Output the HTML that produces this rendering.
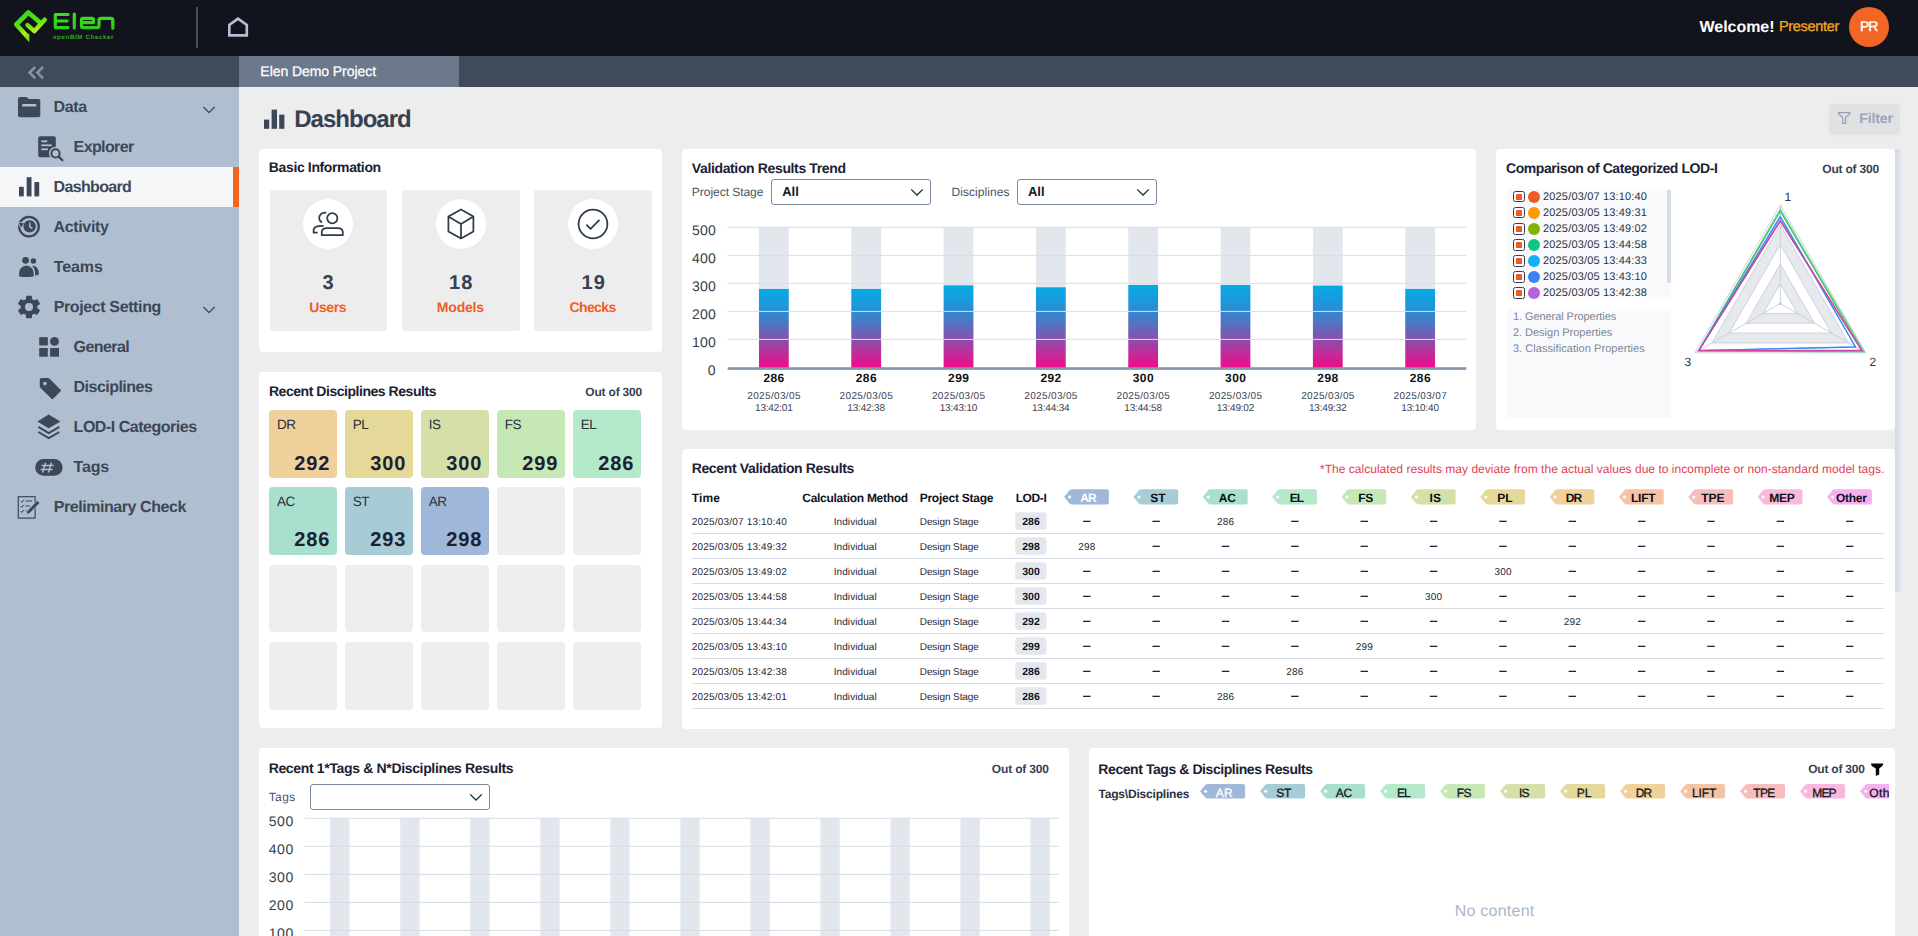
<!DOCTYPE html>
<html><head><meta charset="utf-8"><title>Elen Dashboard</title>
<style>
*{box-sizing:border-box;margin:0;padding:0}
html,body{width:1918px;height:936px;overflow:hidden;background:#ededed;font-family:"Liberation Sans",sans-serif;color:#1b2233;text-rendering:geometricPrecision}
body{position:relative}
.a{position:absolute}
.t{position:absolute;white-space:pre;line-height:1;font-weight:bold}
svg{position:absolute;overflow:visible}
.card{position:absolute;background:#fff;border-radius:4px}

</style></head>
<body>
<div class="a" style="left:0;top:0;width:1918px;height:56px;background:#12141d"></div>
<div class="a" style="left:0;top:56px;width:1918px;height:31px;background:#404b5a"></div>
<div class="a" style="left:239px;top:56px;width:220px;height:31px;background:#6c788c"></div>
<svg style="left:0;top:0" width="130" height="56" viewBox="0 0 130 56">
<defs><linearGradient id="lg1" gradientUnits="userSpaceOnUse" x1="20" y1="10" x2="30" y2="40"><stop offset="0" stop-color="#33d41a"/><stop offset="0.5" stop-color="#4fe016"/><stop offset="0.85" stop-color="#c2ee1e"/><stop offset="1" stop-color="#8fe61c"/></linearGradient>
<linearGradient id="lg2" gradientUnits="userSpaceOnUse" x1="0" y1="12" x2="0" y2="30"><stop offset="0" stop-color="#3fe01d"/><stop offset="1" stop-color="#2fc91a"/></linearGradient></defs>
<g transform="translate(-0.9,-0.7)"><path d="M28.2 37.2 L17.2 25.2 L29.2 13.2 L41.2 23.4" fill="none" stroke="url(#lg1)" stroke-width="4.7" stroke-linejoin="round" stroke-linecap="butt"/>
<path d="M45.6 20.4 L35.3 31.8 L28.4 25.8" fill="none" stroke="url(#lg1)" stroke-width="4.5" stroke-linejoin="round" stroke-linecap="round"/>
<path d="M26.4 35.2 L30.2 34.4 L30.2 43 L26 38.4 Z" fill="#7fe41c"/>
</g>
<g fill="none" stroke="url(#lg2)" stroke-width="3.2" stroke-linejoin="round" stroke-linecap="round">
<path d="M68 14.5 H55.3 V27.6 H68 M55.3 21 H67"/>
<path d="M74.3 14 V28"/>
<path d="M81.5 22.7 H93.4 V20 Q93.4 18.3 91.7 18.3 H83.2 Q81.5 18.3 81.5 20 V26 Q81.5 27.6 83.2 27.6 H97 Q99 27.6 99 25.6 V20.3 Q99 18.3 101 18.3 H110.8 Q112.8 18.3 112.8 20.3 V28.2"/>
</g></svg>
<span class="t" style="left:52.72px;top:35px;font-size:6.2px;letter-spacing:0.607px;color:#2cab18">openBIM Checker</span>
<div class="a" style="left:196px;top:7px;width:2px;height:41px;background:#484f5e"></div>
<svg style="left:220px;top:10px" width="36" height="36" viewBox="220 10 36 36"><path d="M229.3 35.4 V25 L238 18.6 L246.8 25 V35.4 Z" fill="none" stroke="#b4c0d4" stroke-width="2.6" stroke-linejoin="miter"/></svg>
<span class="t" style="left:1699.58px;top:20px;font-size:16px;letter-spacing:-0.049px;color:#fff">Welcome!</span>
<span class="t" style="left:1778.95px;top:20px;font-size:14.5px;letter-spacing:-0.296px;font-weight:normal;color:#f5a51c;-webkit-text-stroke:0.3px #f5a51c">Presenter</span>
<div class="a" style="left:1848.7px;top:6.7px;width:40.6px;height:40.6px;border-radius:50%;background:#f26524"></div>
<span class="t" style="left:1860.00px;top:19px;font-size:14px;letter-spacing:-1.050px;font-weight:normal;color:#fff;-webkit-text-stroke:0.4px #fff">PR</span>
<svg style="left:24px;top:62px" width="24" height="20" viewBox="24 62 24 20"><path d="M35.2 66.8 L29.6 72.6 L35.2 78.4 M43 66.8 L37.4 72.6 L43 78.4" fill="none" stroke="#8794a8" stroke-width="2.6" stroke-linecap="butt" stroke-linejoin="miter"/></svg>
<span class="t" style="left:260.37px;top:64px;font-size:14px;letter-spacing:-0.066px;font-weight:normal;color:#fff;-webkit-text-stroke:0.25px #fff">Elen Demo Project</span>
<div class="a" style="left:0;top:87px;width:239px;height:849px;background:#afbfcf"></div>
<div class="a" style="left:0;top:167px;width:239px;height:40px;background:#f5f6f7"></div>
<div class="a" style="left:233px;top:167px;width:6px;height:40px;background:#f26524"></div>
<span class="t" style="left:53.58px;top:100px;font-size:16px;letter-spacing:-0.382px;color:#3c4758">Data</span>
<span class="t" style="left:73.58px;top:140px;font-size:16px;letter-spacing:-0.612px;color:#3c4758">Explorer</span>
<span class="t" style="left:53.58px;top:180px;font-size:16px;letter-spacing:-0.667px;color:#3c4758">Dashboard</span>
<span class="t" style="left:53.58px;top:220px;font-size:16px;letter-spacing:-0.365px;color:#3c4758">Activity</span>
<span class="t" style="left:53.68px;top:260px;font-size:16px;letter-spacing:-0.094px;color:#3c4758">Teams</span>
<span class="t" style="left:53.68px;top:300px;font-size:16px;letter-spacing:-0.376px;color:#3c4758">Project Setting</span>
<span class="t" style="left:73.58px;top:340px;font-size:16px;letter-spacing:-0.576px;color:#3c4758">General</span>
<span class="t" style="left:73.58px;top:380px;font-size:16px;letter-spacing:-0.524px;color:#3c4758">Disciplines</span>
<span class="t" style="left:73.58px;top:420px;font-size:16px;letter-spacing:-0.476px;color:#3c4758">LOD-I Categories</span>
<span class="t" style="left:73.58px;top:460px;font-size:16px;letter-spacing:-0.172px;color:#3c4758">Tags</span>
<span class="t" style="left:53.68px;top:500px;font-size:16px;letter-spacing:-0.437px;color:#3c4758">Preliminary Check</span>
<svg style="left:200px;top:104px" width="18" height="12" viewBox="0 0 18 12"><path d="M3.4 3 L9 8.6 L14.6 3" fill="none" stroke="#3c4758" stroke-width="1.3"/></svg>
<svg style="left:200px;top:304px" width="18" height="12" viewBox="0 0 18 12"><path d="M3.4 3 L9 8.6 L14.6 3" fill="none" stroke="#3c4758" stroke-width="1.3"/></svg>
<svg style="left:0;top:0" width="239" height="936" viewBox="0 0 239 936"><path d="M18 99 Q18 97 20 97 H26 Q27 97 27.7 97.8 L28.8 99 H38.3 Q40.3 99 40.3 101 V115.2 Q40.3 117.2 38.3 117.2 H20 Q18 117.2 18 115.2 Z" fill="#3c4758"/><rect x="22.2" y="104" width="14.1" height="2.6" rx="0.6" fill="#afbfcf"/><path d="M38.2 138.2 Q38.2 136.2 40.2 136.2 H53.8 Q55.8 136.2 55.8 138.2 V155.3 Q55.8 157.3 53.8 157.3 H40.2 Q38.2 157.3 38.2 155.3 Z" fill="#3c4758"/><rect x="41.3" y="140.4" width="6" height="1.8" fill="#afbfcf"/><rect x="41.3" y="144.4" width="10.4" height="1.8" fill="#afbfcf"/><rect x="41.3" y="148.4" width="6.6" height="1.8" fill="#afbfcf"/><circle cx="55.5" cy="153.4" r="6.6" fill="#afbfcf"/><path d="M58.5 156.6 L63.8 161.8" stroke="#afbfcf" stroke-width="4.6"/><circle cx="55.5" cy="153.4" r="4.1" fill="#afbfcf" stroke="#3c4758" stroke-width="2"/><path d="M58.6 156.6 L62.4 160.3" stroke="#3c4758" stroke-width="2.2" stroke-linecap="round"/><rect x="19" y="186.8" width="4.8" height="9.6" fill="#3c4758"/><rect x="26.7" y="177.2" width="4.8" height="19.2" fill="#3c4758"/><rect x="34.4" y="182" width="4.8" height="14.4" fill="#3c4758"/><circle cx="29" cy="226.6" r="9.8" fill="none" stroke="#3c4758" stroke-width="2.3"/><circle cx="29.6" cy="226.4" r="6.2" fill="#3c4758"/><path d="M29.8 222.6 V226.8 L32.4 228.6" fill="none" stroke="#afbfcf" stroke-width="1.4"/><path d="M17 222 L24.6 222.4 L20.6 228.6 Z" fill="#afbfcf"/><path d="M18.6 222.8 L24 223.2 L21 227.6 Z" fill="#3c4758"/><circle cx="25.6" cy="260.3" r="3.4" fill="#3c4758"/><path d="M19 276.2 Q18.6 266 26.4 265.4 Q34 266 33.8 276.2 Q26 278 19 276.2 Z" fill="#3c4758"/><circle cx="33.4" cy="261" r="2.8" fill="#3c4758"/><path d="M32 265.8 Q38.8 265.4 38.9 274.6 Q37 275.4 35.2 275.6 Q35.4 269 32 265.8 Z" fill="#3c4758"/><path d="M26.43 299.53 L26.75 296.44 L31.25 296.44 L31.57 299.53 L34.18 301.04 L37.03 299.77 L39.27 303.66 L36.75 305.49 L36.75 308.51 L39.27 310.34 L37.03 314.23 L34.18 312.96 L31.57 314.47 L31.25 317.56 L26.75 317.56 L26.43 314.47 L23.82 312.96 L20.97 314.23 L18.73 310.34 L21.25 308.51 L21.25 305.49 L18.73 303.66 L20.97 299.77 L23.82 301.04 Z" fill="#3c4758" stroke="#3c4758" stroke-width="1.2" stroke-linejoin="round"/><circle cx="29" cy="307" r="4" fill="#afbfcf"/><rect x="39.2" y="337.2" width="8.6" height="8.2" fill="#3c4758"/><circle cx="54.5" cy="341.4" r="4.4" fill="#3c4758"/><rect x="39.2" y="348" width="8.6" height="8.7" fill="#3c4758"/><rect x="50.1" y="348" width="8.9" height="8.7" fill="#3c4758"/><path d="M41.6 378 H47.6 Q48.8 378 49.6 378.8 L60.4 389.4 Q61.4 390.4 60.4 391.5 L53.4 398.6 Q52.3 399.6 51.3 398.6 L40.6 388 Q39.8 387.2 39.8 386 V379.8 Q39.8 378 41.6 378 Z" fill="#3c4758"/><circle cx="44.9" cy="383.6" r="1.8" fill="#afbfcf"/><path d="M48.7 414.6 L60.4 421.4 L48.7 428.2 L37.4 421.4 Z" fill="#3c4758"/><path d="M38.4 426.8 L48.7 433 L59.4 426.8 M38.4 432 L48.7 438.2 L59.4 432" fill="none" stroke="#3c4758" stroke-width="2" stroke-linejoin="miter"/><rect x="35.2" y="459.1" width="27.4" height="16.7" rx="8.35" fill="#3c4758"/><path d="M45.6 462.6 L42.6 472.6 M51.4 462.6 L48.4 472.6 M41.6 465.6 H53.6 M40.6 469.6 H52.6" stroke="#afbfcf" stroke-width="1.5" fill="none"/><rect x="18.3" y="496.7" width="16.8" height="21.4" fill="none" stroke="#3c4758" stroke-width="1.2"/><path d="M20.6 501 L21.8 502.4 L24 499.8 M20.6 506 L21.8 507.4 L24 504.8 M20.6 511 L21.8 512.4 L24 509.8" fill="none" stroke="#3c4758" stroke-width="1"/><path d="M25.6 501 H32 M25.6 506 H30 M25.6 511 H27.6" stroke="#3c4758" stroke-width="1"/><path d="M37.2 500.4 L39.8 503 L29.6 513.4 L26.4 514.2 L27 511 Z" fill="#3c4758" stroke="#afbfcf" stroke-width="0.8"/></svg>
<svg style="left:260px;top:104px" width="30" height="28" viewBox="260 104 30 28"><rect x="264" y="119.6" width="5.2" height="9.2" fill="#3c4758"/><rect x="271.6" y="109.6" width="5.4" height="19.2" fill="#3c4758"/><rect x="279.2" y="114.6" width="5.2" height="14.2" fill="#3c4758"/></svg>
<span class="t" style="left:294.22px;top:108px;font-size:24px;letter-spacing:-0.987px;color:#364152">Dashboard</span>
<div class="a" style="left:1829.5px;top:104.2px;width:69.2px;height:29.2px;background:#e0e1e2;border-radius:2px;box-shadow:0 1px 3px rgba(0,0,0,0.10)"></div>
<svg style="left:1834px;top:108px" width="20" height="20" viewBox="1834 108 20 20"><path d="M1838.6 112.6 H1849.8 V114 L1845.6 117.6 V123.4 H1842.8 V117.6 L1838.6 114 Z" fill="none" stroke="#93a0b4" stroke-width="1.2" stroke-linejoin="miter"/></svg>
<span class="t" style="left:1859.37px;top:111px;font-size:14px;letter-spacing:-0.135px;color:#98a5b9">Filter</span>
<div class="card" style="left:258.5px;top:149px;width:403.5px;height:203px"></div>
<div class="card" style="left:258.5px;top:372px;width:403.5px;height:356px"></div>
<div class="card" style="left:682px;top:149px;width:794px;height:280.5px"></div>
<div class="card" style="left:1496px;top:149px;width:399px;height:280.5px"></div>
<div class="card" style="left:682px;top:449px;width:1213px;height:279.5px"></div>
<div class="card" style="left:258.5px;top:748px;width:810.5px;height:200px"></div>
<div class="card" style="left:1089px;top:748px;width:806px;height:200px"></div>
<div class="a" style="left:1895px;top:149px;width:9px;height:443px;background:linear-gradient(90deg,#d2d9e3 0,#dde3ea 45%,#eceff3 80%,#ededed 100%)"></div>
<span class="t" style="left:268.87px;top:160px;font-size:14px;letter-spacing:-0.374px;color:#1b2233">Basic Information</span>
<div class="a" style="left:269.5px;top:190.3px;width:117.5px;height:141px;background:#ededed;border-radius:3px"></div>
<div class="a" style="left:303px;top:199px;width:50px;height:50px;border-radius:50%;background:#fff"></div>
<span class="t" style="left:322.59px;top:273px;font-size:20px;color:#364152">3</span>
<span class="t" style="left:309.27px;top:300px;font-size:14px;letter-spacing:-0.440px;color:#ee5f2b">Users</span>
<div class="a" style="left:402.3px;top:190.3px;width:117.5px;height:141px;background:#ededed;border-radius:3px"></div>
<div class="a" style="left:436px;top:199px;width:50px;height:50px;border-radius:50%;background:#fff"></div>
<span class="t" style="left:449.00px;top:273px;font-size:20px;letter-spacing:1.050px;color:#364152">18</span>
<span class="t" style="left:436.77px;top:300px;font-size:14px;letter-spacing:-0.175px;color:#ee5f2b">Models</span>
<div class="a" style="left:534.2px;top:190.3px;width:117.5px;height:141px;background:#ededed;border-radius:3px"></div>
<div class="a" style="left:568px;top:199px;width:50px;height:50px;border-radius:50%;background:#fff"></div>
<span class="t" style="left:581.40px;top:273px;font-size:20px;letter-spacing:1.250px;color:#364152">19</span>
<span class="t" style="left:569.47px;top:300px;font-size:14px;letter-spacing:-0.611px;color:#ee5f2b">Checks</span>
<svg style="left:300px;top:196px" width="330" height="56" viewBox="300 196 330 56"><g fill="none" stroke="#2f3b4c" stroke-width="1.75" stroke-linejoin="round" stroke-linecap="butt">
<circle cx="332.3" cy="218.3" r="5.1"/>
<path d="M321.8 235.2 V232 Q321.8 228.2 327 228.2 H337.6 Q342.8 228.2 342.8 232 V235.2 Z"/>
<path d="M326.4 212.6 Q321.2 212.2 319.4 216.4 Q318.4 220.4 322 222.4"/>
<path d="M323.6 225.8 Q313.6 225.4 313.6 230.4 V232.6 H317.6"/>
<path d="M461 209.4 L473.4 216.6 V231.4 L461 238.4 L448.4 231.4 V216.6 Z M448.4 216.6 L461 224 L473.4 216.6 M461 224 V238.4"/>
<circle cx="593" cy="224" r="14.4"/>
<path d="M586.4 224.6 L590.6 228.8 L599.4 219.8"/>
</g></svg>
<span class="t" style="left:268.97px;top:384px;font-size:14px;letter-spacing:-0.460px;color:#1b2233">Recent Disciplines Results</span>
<span class="t" style="left:585.36px;top:386px;font-size:12px;letter-spacing:-0.201px;color:#364152">Out of 300</span>
<div class="a" style="left:269.3px;top:410.0px;width:67.7px;height:67.7px;background:#f0d09b;border-radius:4px"></div>
<span class="t" style="left:276.90px;top:418px;font-size:13.5px;font-weight:normal;color:#27303f;letter-spacing:-0.5px">DR</span>
<span class="t" style="left:294.30px;top:454px;font-size:20px;letter-spacing:0.863px;color:#1b2233">292</span>
<div class="a" style="left:345.3px;top:410.0px;width:67.7px;height:67.7px;background:#e5d999;border-radius:4px"></div>
<span class="t" style="left:352.87px;top:418px;font-size:13.5px;font-weight:normal;color:#27303f;letter-spacing:-0.5px">PL</span>
<span class="t" style="left:370.27px;top:454px;font-size:20px;letter-spacing:0.863px;color:#1b2233">300</span>
<div class="a" style="left:421.2px;top:410.0px;width:67.7px;height:67.7px;background:#d5e0a9;border-radius:4px"></div>
<span class="t" style="left:428.84px;top:418px;font-size:13.5px;font-weight:normal;color:#27303f;letter-spacing:-0.5px">IS</span>
<span class="t" style="left:446.24px;top:454px;font-size:20px;letter-spacing:0.863px;color:#1b2233">300</span>
<div class="a" style="left:497.2px;top:410.0px;width:67.7px;height:67.7px;background:#c5e8b5;border-radius:4px"></div>
<span class="t" style="left:504.81px;top:418px;font-size:13.5px;font-weight:normal;color:#27303f;letter-spacing:-0.5px">FS</span>
<span class="t" style="left:522.21px;top:454px;font-size:20px;letter-spacing:0.863px;color:#1b2233">299</span>
<div class="a" style="left:573.2px;top:410.0px;width:67.7px;height:67.7px;background:#b4eac9;border-radius:4px"></div>
<span class="t" style="left:580.78px;top:418px;font-size:13.5px;font-weight:normal;color:#27303f;letter-spacing:-0.5px">EL</span>
<span class="t" style="left:598.18px;top:454px;font-size:20px;letter-spacing:0.863px;color:#1b2233">286</span>
<div class="a" style="left:269.3px;top:487.3px;width:67.7px;height:67.7px;background:#a9dfce;border-radius:4px"></div>
<span class="t" style="left:276.90px;top:495px;font-size:13.5px;font-weight:normal;color:#27303f;letter-spacing:-0.5px">AC</span>
<span class="t" style="left:294.30px;top:530px;font-size:20px;letter-spacing:0.863px;color:#1b2233">286</span>
<div class="a" style="left:345.3px;top:487.3px;width:67.7px;height:67.7px;background:#a7ccd6;border-radius:4px"></div>
<span class="t" style="left:352.87px;top:495px;font-size:13.5px;font-weight:normal;color:#27303f;letter-spacing:-0.5px">ST</span>
<span class="t" style="left:370.27px;top:530px;font-size:20px;letter-spacing:0.863px;color:#1b2233">293</span>
<div class="a" style="left:421.2px;top:487.3px;width:67.7px;height:67.7px;background:#9fb8da;border-radius:4px"></div>
<span class="t" style="left:428.84px;top:495px;font-size:13.5px;font-weight:normal;color:#27303f;letter-spacing:-0.5px">AR</span>
<span class="t" style="left:446.24px;top:530px;font-size:20px;letter-spacing:0.863px;color:#1b2233">298</span>
<div class="a" style="left:497.2px;top:487.3px;width:67.7px;height:67.7px;background:#ededed;border-radius:4px"></div>
<div class="a" style="left:573.2px;top:487.3px;width:67.7px;height:67.7px;background:#ededed;border-radius:4px"></div>
<div class="a" style="left:269.3px;top:564.6px;width:67.7px;height:67.7px;background:#ededed;border-radius:4px"></div>
<div class="a" style="left:345.3px;top:564.6px;width:67.7px;height:67.7px;background:#ededed;border-radius:4px"></div>
<div class="a" style="left:421.2px;top:564.6px;width:67.7px;height:67.7px;background:#ededed;border-radius:4px"></div>
<div class="a" style="left:497.2px;top:564.6px;width:67.7px;height:67.7px;background:#ededed;border-radius:4px"></div>
<div class="a" style="left:573.2px;top:564.6px;width:67.7px;height:67.7px;background:#ededed;border-radius:4px"></div>
<div class="a" style="left:269.3px;top:641.9px;width:67.7px;height:67.7px;background:#ededed;border-radius:4px"></div>
<div class="a" style="left:345.3px;top:641.9px;width:67.7px;height:67.7px;background:#ededed;border-radius:4px"></div>
<div class="a" style="left:421.2px;top:641.9px;width:67.7px;height:67.7px;background:#ededed;border-radius:4px"></div>
<div class="a" style="left:497.2px;top:641.9px;width:67.7px;height:67.7px;background:#ededed;border-radius:4px"></div>
<div class="a" style="left:573.2px;top:641.9px;width:67.7px;height:67.7px;background:#ededed;border-radius:4px"></div>
<span class="t" style="left:691.77px;top:161px;font-size:14px;letter-spacing:-0.362px;color:#1b2233">Validation Results Trend</span>
<span class="t" style="left:691.86px;top:186px;font-size:12px;letter-spacing:-0.039px;font-weight:normal;color:#4a5363">Project Stage</span>
<span class="t" style="left:951.46px;top:186px;font-size:12px;letter-spacing:0.072px;font-weight:normal;color:#4a5363">Disciplines</span>
<div class="a" style="left:771.4px;top:179px;width:159.20000000000005px;height:26px;border:1px solid #7b899f;border-radius:3px;background:#fff"></div>
<svg style="left:909.2px;top:186.0px" width="16" height="12" viewBox="0 0 16 12"><path d="M2.2 3.4 L8 9 L13.8 3.4" fill="none" stroke="#222b38" stroke-width="1.3"/></svg>
<span class="t" style="left:782.21px;top:185px;font-size:13px;letter-spacing:-0.027px;color:#111827">All</span>
<div class="a" style="left:1017.4px;top:179px;width:139.39999999999998px;height:26px;border:1px solid #7b899f;border-radius:3px;background:#fff"></div>
<svg style="left:1135.3999999999999px;top:186.0px" width="16" height="12" viewBox="0 0 16 12"><path d="M2.2 3.4 L8 9 L13.8 3.4" fill="none" stroke="#222b38" stroke-width="1.3"/></svg>
<span class="t" style="left:1028.01px;top:185px;font-size:13px;letter-spacing:-0.027px;color:#111827">All</span>
<span class="t" style="left:763.42px;top:372px;font-size:12px;letter-spacing:0.424px;color:#0f1115">286</span>
<span class="t" style="left:747.26px;top:392px;font-size:10px;letter-spacing:0.349px;font-weight:normal;color:#3a424f">2025/03/05</span>
<span class="t" style="left:755.01px;top:404px;font-size:10px;letter-spacing:-0.177px;font-weight:normal;color:#3a424f">13:42:01</span>
<span class="t" style="left:855.75px;top:372px;font-size:12px;letter-spacing:0.424px;color:#0f1115">286</span>
<span class="t" style="left:839.59px;top:392px;font-size:10px;letter-spacing:0.349px;font-weight:normal;color:#3a424f">2025/03/05</span>
<span class="t" style="left:847.34px;top:404px;font-size:10px;letter-spacing:-0.177px;font-weight:normal;color:#3a424f">13:42:38</span>
<span class="t" style="left:948.07px;top:372px;font-size:12px;letter-spacing:0.424px;color:#0f1115">299</span>
<span class="t" style="left:931.91px;top:392px;font-size:10px;letter-spacing:0.349px;font-weight:normal;color:#3a424f">2025/03/05</span>
<span class="t" style="left:939.66px;top:404px;font-size:10px;letter-spacing:-0.177px;font-weight:normal;color:#3a424f">13:43:10</span>
<span class="t" style="left:1040.40px;top:372px;font-size:12px;letter-spacing:0.424px;color:#0f1115">292</span>
<span class="t" style="left:1024.24px;top:392px;font-size:10px;letter-spacing:0.349px;font-weight:normal;color:#3a424f">2025/03/05</span>
<span class="t" style="left:1031.99px;top:404px;font-size:10px;letter-spacing:-0.177px;font-weight:normal;color:#3a424f">13:44:34</span>
<span class="t" style="left:1132.72px;top:372px;font-size:12px;letter-spacing:0.424px;color:#0f1115">300</span>
<span class="t" style="left:1116.56px;top:392px;font-size:10px;letter-spacing:0.349px;font-weight:normal;color:#3a424f">2025/03/05</span>
<span class="t" style="left:1124.31px;top:404px;font-size:10px;letter-spacing:-0.177px;font-weight:normal;color:#3a424f">13:44:58</span>
<span class="t" style="left:1225.05px;top:372px;font-size:12px;letter-spacing:0.424px;color:#0f1115">300</span>
<span class="t" style="left:1208.89px;top:392px;font-size:10px;letter-spacing:0.349px;font-weight:normal;color:#3a424f">2025/03/05</span>
<span class="t" style="left:1216.64px;top:404px;font-size:10px;letter-spacing:-0.177px;font-weight:normal;color:#3a424f">13:49:02</span>
<span class="t" style="left:1317.37px;top:372px;font-size:12px;letter-spacing:0.424px;color:#0f1115">298</span>
<span class="t" style="left:1301.21px;top:392px;font-size:10px;letter-spacing:0.349px;font-weight:normal;color:#3a424f">2025/03/05</span>
<span class="t" style="left:1308.96px;top:404px;font-size:10px;letter-spacing:-0.177px;font-weight:normal;color:#3a424f">13:49:32</span>
<span class="t" style="left:1409.70px;top:372px;font-size:12px;letter-spacing:0.424px;color:#0f1115">286</span>
<span class="t" style="left:1393.54px;top:392px;font-size:10px;letter-spacing:0.349px;font-weight:normal;color:#3a424f">2025/03/07</span>
<span class="t" style="left:1401.29px;top:404px;font-size:10px;letter-spacing:-0.177px;font-weight:normal;color:#3a424f">13:10:40</span>
<svg style="left:0;top:0" width="1918" height="440" viewBox="0 0 1918 440"><defs><linearGradient id="bg1" x1="0" y1="0" x2="0" y2="1"><stop offset="0" stop-color="#07aae5"/><stop offset="0.2" stop-color="#1b98da"/><stop offset="0.42" stop-color="#4a78c6"/><stop offset="0.6" stop-color="#7c58b0"/><stop offset="0.76" stop-color="#b0379f"/><stop offset="0.9" stop-color="#dc1a92"/><stop offset="1" stop-color="#ee0c8a"/></linearGradient></defs><rect x="758.96" y="227.2" width="29.8" height="61.72" fill="#e2e7ee"/><rect x="758.96" y="288.92" width="29.8" height="80.08" fill="url(#bg1)"/><rect x="851.29" y="227.2" width="29.8" height="61.72" fill="#e2e7ee"/><rect x="851.29" y="288.92" width="29.8" height="80.08" fill="url(#bg1)"/><rect x="943.61" y="227.2" width="29.8" height="58.08" fill="#e2e7ee"/><rect x="943.61" y="285.28" width="29.8" height="83.72" fill="url(#bg1)"/><rect x="1035.94" y="227.2" width="29.8" height="60.04" fill="#e2e7ee"/><rect x="1035.94" y="287.24" width="29.8" height="81.76" fill="url(#bg1)"/><rect x="1128.26" y="227.2" width="29.8" height="57.80" fill="#e2e7ee"/><rect x="1128.26" y="285.00" width="29.8" height="84.00" fill="url(#bg1)"/><rect x="1220.59" y="227.2" width="29.8" height="57.80" fill="#e2e7ee"/><rect x="1220.59" y="285.00" width="29.8" height="84.00" fill="url(#bg1)"/><rect x="1312.91" y="227.2" width="29.8" height="58.36" fill="#e2e7ee"/><rect x="1312.91" y="285.56" width="29.8" height="83.44" fill="url(#bg1)"/><rect x="1405.24" y="227.2" width="29.8" height="61.72" fill="#e2e7ee"/><rect x="1405.24" y="288.92" width="29.8" height="80.08" fill="url(#bg1)"/><rect x="727.7" y="226.9" width="738.5999999999999" height="1" fill="#d9dfe8"/><rect x="727.7" y="254.9" width="738.5999999999999" height="1" fill="#d9dfe8"/><rect x="727.7" y="282.9" width="738.5999999999999" height="1" fill="#d9dfe8"/><rect x="727.7" y="310.9" width="738.5999999999999" height="1" fill="#d9dfe8"/><rect x="727.7" y="338.9" width="738.5999999999999" height="1" fill="#d9dfe8"/><rect x="727.7" y="367.2" width="738.5999999999999" height="2.7" fill="#8797ac"/></svg>
<span class="t" style="left:692.07px;top:223px;font-size:14px;letter-spacing:0.200px;font-weight:normal;color:#363e4b">500</span>
<span class="t" style="left:692.07px;top:251px;font-size:14px;letter-spacing:0.200px;font-weight:normal;color:#363e4b">400</span>
<span class="t" style="left:692.07px;top:279px;font-size:14px;letter-spacing:0.200px;font-weight:normal;color:#363e4b">300</span>
<span class="t" style="left:692.07px;top:307px;font-size:14px;letter-spacing:0.200px;font-weight:normal;color:#363e4b">200</span>
<span class="t" style="left:692.07px;top:335px;font-size:14px;letter-spacing:0.200px;font-weight:normal;color:#363e4b">100</span>
<span class="t" style="left:707.80px;top:363px;font-size:14px;font-weight:normal;color:#363e4b">0</span>
<span class="t" style="left:1506.07px;top:161px;font-size:14px;letter-spacing:-0.435px;color:#1b2233">Comparison of Categorized LOD-I</span>
<span class="t" style="left:1822.26px;top:163px;font-size:12px;letter-spacing:-0.190px;color:#364152">Out of 300</span>
<div class="a" style="left:1506.7px;top:189px;width:164.8px;height:109.8px;background:#f8f9fb"></div>
<div class="a" style="left:1667.3px;top:189.6px;width:3.4px;height:93.8px;background:#d6dce5;border-radius:1px"></div>
<div class="a" style="left:1506.7px;top:309.3px;width:164.8px;height:109px;background:#f8f9fb"></div>
<div class="a" style="left:1513.2px;top:190.9px;width:11.6px;height:11.6px;border:1.2px solid #363d4a;border-radius:2.5px;background:#fff"></div>
<div class="a" style="left:1516px;top:193.7px;width:6px;height:6.2px;background:#f1592a;border-radius:0.5px"></div>
<div class="a" style="left:1527.9px;top:190.7px;width:12px;height:12px;border-radius:50%;background:#f05a28"></div>
<span class="t" style="left:1543.01px;top:192px;font-size:11px;letter-spacing:0.170px;font-weight:normal;color:#2b3442">2025/03/07 13:10:40</span>
<div class="a" style="left:1513.2px;top:206.9px;width:11.6px;height:11.6px;border:1.2px solid #363d4a;border-radius:2.5px;background:#fff"></div>
<div class="a" style="left:1516px;top:209.7px;width:6px;height:6.2px;background:#f1592a;border-radius:0.5px"></div>
<div class="a" style="left:1527.9px;top:206.7px;width:12px;height:12px;border-radius:50%;background:#ff9800"></div>
<span class="t" style="left:1543.01px;top:208px;font-size:11px;letter-spacing:0.170px;font-weight:normal;color:#2b3442">2025/03/05 13:49:31</span>
<div class="a" style="left:1513.2px;top:223.0px;width:11.6px;height:11.6px;border:1.2px solid #363d4a;border-radius:2.5px;background:#fff"></div>
<div class="a" style="left:1516px;top:225.8px;width:6px;height:6.2px;background:#f1592a;border-radius:0.5px"></div>
<div class="a" style="left:1527.9px;top:222.8px;width:12px;height:12px;border-radius:50%;background:#84b000"></div>
<span class="t" style="left:1543.01px;top:224px;font-size:11px;letter-spacing:0.170px;font-weight:normal;color:#2b3442">2025/03/05 13:49:02</span>
<div class="a" style="left:1513.2px;top:239.0px;width:11.6px;height:11.6px;border:1.2px solid #363d4a;border-radius:2.5px;background:#fff"></div>
<div class="a" style="left:1516px;top:241.8px;width:6px;height:6.2px;background:#f1592a;border-radius:0.5px"></div>
<div class="a" style="left:1527.9px;top:238.8px;width:12px;height:12px;border-radius:50%;background:#10c57f"></div>
<span class="t" style="left:1543.01px;top:240px;font-size:11px;letter-spacing:0.170px;font-weight:normal;color:#2b3442">2025/03/05 13:44:58</span>
<div class="a" style="left:1513.2px;top:255.0px;width:11.6px;height:11.6px;border:1.2px solid #363d4a;border-radius:2.5px;background:#fff"></div>
<div class="a" style="left:1516px;top:257.8px;width:6px;height:6.2px;background:#f1592a;border-radius:0.5px"></div>
<div class="a" style="left:1527.9px;top:254.8px;width:12px;height:12px;border-radius:50%;background:#0fb0f5"></div>
<span class="t" style="left:1543.01px;top:256px;font-size:11px;letter-spacing:0.170px;font-weight:normal;color:#2b3442">2025/03/05 13:44:33</span>
<div class="a" style="left:1513.2px;top:271.1px;width:11.6px;height:11.6px;border:1.2px solid #363d4a;border-radius:2.5px;background:#fff"></div>
<div class="a" style="left:1516px;top:273.9px;width:6px;height:6.2px;background:#f1592a;border-radius:0.5px"></div>
<div class="a" style="left:1527.9px;top:270.9px;width:12px;height:12px;border-radius:50%;background:#3b82f6"></div>
<span class="t" style="left:1543.01px;top:272px;font-size:11px;letter-spacing:0.170px;font-weight:normal;color:#2b3442">2025/03/05 13:43:10</span>
<div class="a" style="left:1513.2px;top:287.1px;width:11.6px;height:11.6px;border:1.2px solid #363d4a;border-radius:2.5px;background:#fff"></div>
<div class="a" style="left:1516px;top:289.9px;width:6px;height:6.2px;background:#f1592a;border-radius:0.5px"></div>
<div class="a" style="left:1527.9px;top:286.9px;width:12px;height:12px;border-radius:50%;background:#b660e0"></div>
<span class="t" style="left:1543.01px;top:288px;font-size:11px;letter-spacing:0.170px;font-weight:normal;color:#2b3442">2025/03/05 13:42:38</span>
<span class="t" style="left:1512.91px;top:312px;font-size:11px;letter-spacing:-0.064px;font-weight:normal;color:#7c8593">1. General Properties</span>
<span class="t" style="left:1512.91px;top:328px;font-size:11px;letter-spacing:-0.015px;font-weight:normal;color:#7c8593">2. Design Properties</span>
<span class="t" style="left:1512.91px;top:344px;font-size:11px;letter-spacing:0.058px;font-weight:normal;color:#7c8593">3. Classification Properties</span>
<svg style="left:0;top:0" width="1918" height="440" viewBox="0 0 1918 440"><polygon points="1780.30,204.90 1865.69,352.80 1694.91,352.80" fill="#ffffff" stroke="#ccd2da" stroke-width="1"/><polygon points="1780.30,224.62 1848.61,342.94 1711.99,342.94" fill="#e6e9ed" stroke="#ccd2da" stroke-width="1"/><polygon points="1780.30,244.34 1831.53,333.08 1729.07,333.08" fill="#ffffff" stroke="#ccd2da" stroke-width="1"/><polygon points="1780.30,264.06 1814.46,323.22 1746.14,323.22" fill="#e6e9ed" stroke="#ccd2da" stroke-width="1"/><polygon points="1780.30,283.78 1797.38,313.36 1763.22,313.36" fill="#ffffff" stroke="#ccd2da" stroke-width="1"/><line x1="1780.3" y1="303.5" x2="1780.30" y2="204.90" stroke="#ccd2da" stroke-width="1"/><line x1="1780.3" y1="303.5" x2="1865.69" y2="352.80" stroke="#ccd2da" stroke-width="1"/><line x1="1780.3" y1="303.5" x2="1694.91" y2="352.80" stroke="#ccd2da" stroke-width="1"/><polygon points="1780.30,209.14 1864.41,352.06 1698.33,350.83" fill="none" stroke="#5fd6a6" stroke-width="1.1" stroke-linejoin="miter"/><polygon points="1780.30,211.21 1862.45,350.93 1698.75,350.58" fill="none" stroke="#3fb34a" stroke-width="1.1" stroke-linejoin="miter"/><polygon points="1780.30,220.48 1862.02,350.68 1698.75,350.58" fill="none" stroke="#f05a28" stroke-width="1.1" stroke-linejoin="miter"/><polygon points="1780.30,220.68 1861.85,350.58 1698.75,350.58" fill="none" stroke="#ff9800" stroke-width="1.1" stroke-linejoin="miter"/><polygon points="1780.30,215.94 1855.87,347.13 1698.92,350.48" fill="none" stroke="#29b6f6" stroke-width="1.1" stroke-linejoin="miter"/><polygon points="1780.30,217.23 1855.44,346.88 1698.92,350.48" fill="none" stroke="#3b82f6" stroke-width="1.1" stroke-linejoin="miter"/><polygon points="1780.30,221.17 1861.42,350.33 1699.18,350.33" fill="none" stroke="#b660e0" stroke-width="1.1" stroke-linejoin="miter"/><polygon points="1780.30,220.48 1862.02,350.68 1698.75,350.58" fill="none" stroke="#d6409f" stroke-width="1.1" stroke-linejoin="miter"/><circle cx="1780.3" cy="303.5" r="1.3" fill="#c3c9d2"/></svg>
<span class="t" style="left:1784.60px;top:191px;font-size:12px;font-weight:normal;color:#333a45">1</span>
<span class="t" style="left:1869.60px;top:356px;font-size:12px;font-weight:normal;color:#333a45">2</span>
<span class="t" style="left:1684.60px;top:356px;font-size:12px;font-weight:normal;color:#333a45">3</span>
<svg style="left:0;top:440px" width="1918" height="300" viewBox="0 440 1918 300"><path d="M1064.10 496.95 L1069.53 490.30 Q1070.53 489.30 1072.13 489.30 H1106.90 Q1108.90 489.30 1108.90 491.30 V502.60 Q1108.90 504.60 1106.90 504.60 H1072.13 Q1070.53 504.60 1069.53 503.60 Z" fill="#9fb8da"/><circle cx="1069.60" cy="496.95" r="1.5" fill="#fff"/><path d="M1133.46 496.95 L1138.89 490.30 Q1139.89 489.30 1141.49 489.30 H1176.26 Q1178.26 489.30 1178.26 491.30 V502.60 Q1178.26 504.60 1176.26 504.60 H1141.49 Q1139.89 504.60 1138.89 503.60 Z" fill="#a7ccd6"/><circle cx="1138.96" cy="496.95" r="1.5" fill="#fff"/><path d="M1202.82 496.95 L1208.25 490.30 Q1209.25 489.30 1210.85 489.30 H1245.62 Q1247.62 489.30 1247.62 491.30 V502.60 Q1247.62 504.60 1245.62 504.60 H1210.85 Q1209.25 504.60 1208.25 503.60 Z" fill="#a9dfce"/><circle cx="1208.32" cy="496.95" r="1.5" fill="#fff"/><path d="M1272.18 496.95 L1277.61 490.30 Q1278.61 489.30 1280.21 489.30 H1314.98 Q1316.98 489.30 1316.98 491.30 V502.60 Q1316.98 504.60 1314.98 504.60 H1280.21 Q1278.61 504.60 1277.61 503.60 Z" fill="#b4eac9"/><circle cx="1277.68" cy="496.95" r="1.5" fill="#fff"/><path d="M1341.54 496.95 L1346.97 490.30 Q1347.97 489.30 1349.57 489.30 H1384.34 Q1386.34 489.30 1386.34 491.30 V502.60 Q1386.34 504.60 1384.34 504.60 H1349.57 Q1347.97 504.60 1346.97 503.60 Z" fill="#c5e8b5"/><circle cx="1347.04" cy="496.95" r="1.5" fill="#fff"/><path d="M1410.90 496.95 L1416.33 490.30 Q1417.33 489.30 1418.93 489.30 H1453.70 Q1455.70 489.30 1455.70 491.30 V502.60 Q1455.70 504.60 1453.70 504.60 H1418.93 Q1417.33 504.60 1416.33 503.60 Z" fill="#d5e0a9"/><circle cx="1416.40" cy="496.95" r="1.5" fill="#fff"/><path d="M1480.26 496.95 L1485.69 490.30 Q1486.69 489.30 1488.29 489.30 H1523.06 Q1525.06 489.30 1525.06 491.30 V502.60 Q1525.06 504.60 1523.06 504.60 H1488.29 Q1486.69 504.60 1485.69 503.60 Z" fill="#e5d999"/><circle cx="1485.76" cy="496.95" r="1.5" fill="#fff"/><path d="M1549.62 496.95 L1555.05 490.30 Q1556.05 489.30 1557.65 489.30 H1592.42 Q1594.42 489.30 1594.42 491.30 V502.60 Q1594.42 504.60 1592.42 504.60 H1557.65 Q1556.05 504.60 1555.05 503.60 Z" fill="#f0d09b"/><circle cx="1555.12" cy="496.95" r="1.5" fill="#fff"/><path d="M1618.98 496.95 L1624.41 490.30 Q1625.41 489.30 1627.01 489.30 H1661.78 Q1663.78 489.30 1663.78 491.30 V502.60 Q1663.78 504.60 1661.78 504.60 H1627.01 Q1625.41 504.60 1624.41 503.60 Z" fill="#f5c4a4"/><circle cx="1624.48" cy="496.95" r="1.5" fill="#fff"/><path d="M1688.34 496.95 L1693.77 490.30 Q1694.77 489.30 1696.37 489.30 H1731.14 Q1733.14 489.30 1733.14 491.30 V502.60 Q1733.14 504.60 1731.14 504.60 H1696.37 Q1694.77 504.60 1693.77 503.60 Z" fill="#f7bcbc"/><circle cx="1693.84" cy="496.95" r="1.5" fill="#fff"/><path d="M1757.70 496.95 L1763.13 490.30 Q1764.13 489.30 1765.73 489.30 H1800.50 Q1802.50 489.30 1802.50 491.30 V502.60 Q1802.50 504.60 1800.50 504.60 H1765.73 Q1764.13 504.60 1763.13 503.60 Z" fill="#f9b8dc"/><circle cx="1763.20" cy="496.95" r="1.5" fill="#fff"/><path d="M1827.06 496.95 L1832.49 490.30 Q1833.49 489.30 1835.09 489.30 H1869.86 Q1871.86 489.30 1871.86 491.30 V502.60 Q1871.86 504.60 1869.86 504.60 H1835.09 Q1833.49 504.60 1832.49 503.60 Z" fill="#f5b0f0"/><circle cx="1832.56" cy="496.95" r="1.5" fill="#fff"/><rect x="1015.2" y="512.2" width="31.4" height="17.5" rx="3" fill="#e4e8ee"/><rect x="692" y="533.0" width="1192" height="1" fill="#d5dce6"/><rect x="1083.10" y="520.7" width="7.4" height="1.3" fill="#1f2733"/><rect x="1152.46" y="520.7" width="7.4" height="1.3" fill="#1f2733"/><rect x="1291.18" y="520.7" width="7.4" height="1.3" fill="#1f2733"/><rect x="1360.54" y="520.7" width="7.4" height="1.3" fill="#1f2733"/><rect x="1429.90" y="520.7" width="7.4" height="1.3" fill="#1f2733"/><rect x="1499.26" y="520.7" width="7.4" height="1.3" fill="#1f2733"/><rect x="1568.62" y="520.7" width="7.4" height="1.3" fill="#1f2733"/><rect x="1637.98" y="520.7" width="7.4" height="1.3" fill="#1f2733"/><rect x="1707.34" y="520.7" width="7.4" height="1.3" fill="#1f2733"/><rect x="1776.70" y="520.7" width="7.4" height="1.3" fill="#1f2733"/><rect x="1846.06" y="520.7" width="7.4" height="1.3" fill="#1f2733"/><rect x="1015.2" y="537.2" width="31.4" height="17.5" rx="3" fill="#e4e8ee"/><rect x="692" y="558.0" width="1192" height="1" fill="#d5dce6"/><rect x="1152.46" y="545.7" width="7.4" height="1.3" fill="#1f2733"/><rect x="1221.82" y="545.7" width="7.4" height="1.3" fill="#1f2733"/><rect x="1291.18" y="545.7" width="7.4" height="1.3" fill="#1f2733"/><rect x="1360.54" y="545.7" width="7.4" height="1.3" fill="#1f2733"/><rect x="1429.90" y="545.7" width="7.4" height="1.3" fill="#1f2733"/><rect x="1499.26" y="545.7" width="7.4" height="1.3" fill="#1f2733"/><rect x="1568.62" y="545.7" width="7.4" height="1.3" fill="#1f2733"/><rect x="1637.98" y="545.7" width="7.4" height="1.3" fill="#1f2733"/><rect x="1707.34" y="545.7" width="7.4" height="1.3" fill="#1f2733"/><rect x="1776.70" y="545.7" width="7.4" height="1.3" fill="#1f2733"/><rect x="1846.06" y="545.7" width="7.4" height="1.3" fill="#1f2733"/><rect x="1015.2" y="562.2" width="31.4" height="17.5" rx="3" fill="#e4e8ee"/><rect x="692" y="583.0" width="1192" height="1" fill="#d5dce6"/><rect x="1083.10" y="570.7" width="7.4" height="1.3" fill="#1f2733"/><rect x="1152.46" y="570.7" width="7.4" height="1.3" fill="#1f2733"/><rect x="1221.82" y="570.7" width="7.4" height="1.3" fill="#1f2733"/><rect x="1291.18" y="570.7" width="7.4" height="1.3" fill="#1f2733"/><rect x="1360.54" y="570.7" width="7.4" height="1.3" fill="#1f2733"/><rect x="1429.90" y="570.7" width="7.4" height="1.3" fill="#1f2733"/><rect x="1568.62" y="570.7" width="7.4" height="1.3" fill="#1f2733"/><rect x="1637.98" y="570.7" width="7.4" height="1.3" fill="#1f2733"/><rect x="1707.34" y="570.7" width="7.4" height="1.3" fill="#1f2733"/><rect x="1776.70" y="570.7" width="7.4" height="1.3" fill="#1f2733"/><rect x="1846.06" y="570.7" width="7.4" height="1.3" fill="#1f2733"/><rect x="1015.2" y="587.2" width="31.4" height="17.5" rx="3" fill="#e4e8ee"/><rect x="692" y="608.0" width="1192" height="1" fill="#d5dce6"/><rect x="1083.10" y="595.7" width="7.4" height="1.3" fill="#1f2733"/><rect x="1152.46" y="595.7" width="7.4" height="1.3" fill="#1f2733"/><rect x="1221.82" y="595.7" width="7.4" height="1.3" fill="#1f2733"/><rect x="1291.18" y="595.7" width="7.4" height="1.3" fill="#1f2733"/><rect x="1360.54" y="595.7" width="7.4" height="1.3" fill="#1f2733"/><rect x="1499.26" y="595.7" width="7.4" height="1.3" fill="#1f2733"/><rect x="1568.62" y="595.7" width="7.4" height="1.3" fill="#1f2733"/><rect x="1637.98" y="595.7" width="7.4" height="1.3" fill="#1f2733"/><rect x="1707.34" y="595.7" width="7.4" height="1.3" fill="#1f2733"/><rect x="1776.70" y="595.7" width="7.4" height="1.3" fill="#1f2733"/><rect x="1846.06" y="595.7" width="7.4" height="1.3" fill="#1f2733"/><rect x="1015.2" y="612.2" width="31.4" height="17.5" rx="3" fill="#e4e8ee"/><rect x="692" y="633.0" width="1192" height="1" fill="#d5dce6"/><rect x="1083.10" y="620.7" width="7.4" height="1.3" fill="#1f2733"/><rect x="1152.46" y="620.7" width="7.4" height="1.3" fill="#1f2733"/><rect x="1221.82" y="620.7" width="7.4" height="1.3" fill="#1f2733"/><rect x="1291.18" y="620.7" width="7.4" height="1.3" fill="#1f2733"/><rect x="1360.54" y="620.7" width="7.4" height="1.3" fill="#1f2733"/><rect x="1429.90" y="620.7" width="7.4" height="1.3" fill="#1f2733"/><rect x="1499.26" y="620.7" width="7.4" height="1.3" fill="#1f2733"/><rect x="1637.98" y="620.7" width="7.4" height="1.3" fill="#1f2733"/><rect x="1707.34" y="620.7" width="7.4" height="1.3" fill="#1f2733"/><rect x="1776.70" y="620.7" width="7.4" height="1.3" fill="#1f2733"/><rect x="1846.06" y="620.7" width="7.4" height="1.3" fill="#1f2733"/><rect x="1015.2" y="637.2" width="31.4" height="17.5" rx="3" fill="#e4e8ee"/><rect x="692" y="658.0" width="1192" height="1" fill="#d5dce6"/><rect x="1083.10" y="645.7" width="7.4" height="1.3" fill="#1f2733"/><rect x="1152.46" y="645.7" width="7.4" height="1.3" fill="#1f2733"/><rect x="1221.82" y="645.7" width="7.4" height="1.3" fill="#1f2733"/><rect x="1291.18" y="645.7" width="7.4" height="1.3" fill="#1f2733"/><rect x="1429.90" y="645.7" width="7.4" height="1.3" fill="#1f2733"/><rect x="1499.26" y="645.7" width="7.4" height="1.3" fill="#1f2733"/><rect x="1568.62" y="645.7" width="7.4" height="1.3" fill="#1f2733"/><rect x="1637.98" y="645.7" width="7.4" height="1.3" fill="#1f2733"/><rect x="1707.34" y="645.7" width="7.4" height="1.3" fill="#1f2733"/><rect x="1776.70" y="645.7" width="7.4" height="1.3" fill="#1f2733"/><rect x="1846.06" y="645.7" width="7.4" height="1.3" fill="#1f2733"/><rect x="1015.2" y="662.2" width="31.4" height="17.5" rx="3" fill="#e4e8ee"/><rect x="692" y="683.0" width="1192" height="1" fill="#d5dce6"/><rect x="1083.10" y="670.7" width="7.4" height="1.3" fill="#1f2733"/><rect x="1152.46" y="670.7" width="7.4" height="1.3" fill="#1f2733"/><rect x="1221.82" y="670.7" width="7.4" height="1.3" fill="#1f2733"/><rect x="1360.54" y="670.7" width="7.4" height="1.3" fill="#1f2733"/><rect x="1429.90" y="670.7" width="7.4" height="1.3" fill="#1f2733"/><rect x="1499.26" y="670.7" width="7.4" height="1.3" fill="#1f2733"/><rect x="1568.62" y="670.7" width="7.4" height="1.3" fill="#1f2733"/><rect x="1637.98" y="670.7" width="7.4" height="1.3" fill="#1f2733"/><rect x="1707.34" y="670.7" width="7.4" height="1.3" fill="#1f2733"/><rect x="1776.70" y="670.7" width="7.4" height="1.3" fill="#1f2733"/><rect x="1846.06" y="670.7" width="7.4" height="1.3" fill="#1f2733"/><rect x="1015.2" y="687.2" width="31.4" height="17.5" rx="3" fill="#e4e8ee"/><rect x="692" y="708.0" width="1192" height="1" fill="#d5dce6"/><rect x="1083.10" y="695.7" width="7.4" height="1.3" fill="#1f2733"/><rect x="1152.46" y="695.7" width="7.4" height="1.3" fill="#1f2733"/><rect x="1291.18" y="695.7" width="7.4" height="1.3" fill="#1f2733"/><rect x="1360.54" y="695.7" width="7.4" height="1.3" fill="#1f2733"/><rect x="1429.90" y="695.7" width="7.4" height="1.3" fill="#1f2733"/><rect x="1499.26" y="695.7" width="7.4" height="1.3" fill="#1f2733"/><rect x="1568.62" y="695.7" width="7.4" height="1.3" fill="#1f2733"/><rect x="1637.98" y="695.7" width="7.4" height="1.3" fill="#1f2733"/><rect x="1707.34" y="695.7" width="7.4" height="1.3" fill="#1f2733"/><rect x="1776.70" y="695.7" width="7.4" height="1.3" fill="#1f2733"/><rect x="1846.06" y="695.7" width="7.4" height="1.3" fill="#1f2733"/></svg>
<span class="t" style="left:691.67px;top:461px;font-size:14px;letter-spacing:-0.355px;color:#1b2233">Recent Validation Results</span>
<span class="t" style="left:1319.96px;top:463px;font-size:12px;letter-spacing:0.026px;font-weight:normal;color:#e43d52">*The calculated results may deviate from the actual values due to incomplete or non-standard model tags.</span>
<span class="t" style="left:691.76px;top:492px;font-size:12px;letter-spacing:0.128px;color:#10141c">Time</span>
<span class="t" style="left:802.26px;top:492px;font-size:12px;letter-spacing:-0.282px;color:#10141c">Calculation Method</span>
<span class="t" style="left:919.66px;top:492px;font-size:12px;letter-spacing:-0.244px;color:#10141c">Project Stage</span>
<span class="t" style="left:1015.66px;top:492px;font-size:12px;letter-spacing:-0.373px;color:#10141c">LOD-I</span>
<span class="t" style="left:1080.28px;top:492px;font-size:12px;letter-spacing:-0.900px;color:#fff">AR</span>
<span class="t" style="left:1150.26px;top:492px;font-size:12px;letter-spacing:0.036px;color:#0b0f16">ST</span>
<span class="t" style="left:1218.86px;top:492px;font-size:12px;letter-spacing:-0.264px;color:#0b0f16">AC</span>
<span class="t" style="left:1289.66px;top:492px;font-size:12px;letter-spacing:-0.864px;color:#0b0f16">EL</span>
<span class="t" style="left:1358.26px;top:492px;font-size:12px;letter-spacing:-0.264px;color:#0b0f16">FS</span>
<span class="t" style="left:1429.56px;top:492px;font-size:12px;letter-spacing:0.236px;color:#0b0f16">IS</span>
<span class="t" style="left:1497.36px;top:492px;font-size:12px;letter-spacing:-0.164px;color:#0b0f16">PL</span>
<span class="t" style="left:1565.83px;top:492px;font-size:12px;letter-spacing:-0.900px;color:#0b0f16">DR</span>
<span class="t" style="left:1630.96px;top:492px;font-size:12px;letter-spacing:-0.216px;color:#0b0f16">LIFT</span>
<span class="t" style="left:1701.36px;top:492px;font-size:12px;letter-spacing:-0.132px;color:#0b0f16">TPE</span>
<span class="t" style="left:1769.16px;top:492px;font-size:12px;letter-spacing:-0.168px;color:#0b0f16">MEP</span>
<span class="t" style="left:1835.96px;top:492px;font-size:12px;letter-spacing:-0.284px;color:#0b0f16">Other</span>
<span class="t" style="left:691.85px;top:518px;font-size:10px;letter-spacing:0.180px;font-weight:normal;color:#1f2733">2025/03/07 13:10:40</span>
<span class="t" style="left:833.75px;top:518px;font-size:10px;letter-spacing:0.070px;font-weight:normal;color:#1f2733">Individual</span>
<span class="t" style="left:919.75px;top:518px;font-size:10px;letter-spacing:-0.086px;font-weight:normal;color:#1f2733">Design Stage</span>
<span class="t" style="left:1022.13px;top:517px;font-size:10.5px;letter-spacing:0.107px;color:#10141c">286</span>
<span class="t" style="left:1216.97px;top:518px;font-size:10px;letter-spacing:0.206px;font-weight:normal;color:#1f2733">286</span>
<span class="t" style="left:691.85px;top:543px;font-size:10px;letter-spacing:0.180px;font-weight:normal;color:#1f2733">2025/03/05 13:49:32</span>
<span class="t" style="left:833.75px;top:543px;font-size:10px;letter-spacing:0.070px;font-weight:normal;color:#1f2733">Individual</span>
<span class="t" style="left:919.75px;top:543px;font-size:10px;letter-spacing:-0.086px;font-weight:normal;color:#1f2733">Design Stage</span>
<span class="t" style="left:1022.13px;top:542px;font-size:10.5px;letter-spacing:0.107px;color:#10141c">298</span>
<span class="t" style="left:1078.25px;top:543px;font-size:10px;letter-spacing:0.206px;font-weight:normal;color:#1f2733">298</span>
<span class="t" style="left:691.85px;top:568px;font-size:10px;letter-spacing:0.180px;font-weight:normal;color:#1f2733">2025/03/05 13:49:02</span>
<span class="t" style="left:833.75px;top:568px;font-size:10px;letter-spacing:0.070px;font-weight:normal;color:#1f2733">Individual</span>
<span class="t" style="left:919.75px;top:568px;font-size:10px;letter-spacing:-0.086px;font-weight:normal;color:#1f2733">Design Stage</span>
<span class="t" style="left:1022.13px;top:567px;font-size:10.5px;letter-spacing:0.107px;color:#10141c">300</span>
<span class="t" style="left:1494.41px;top:568px;font-size:10px;letter-spacing:0.206px;font-weight:normal;color:#1f2733">300</span>
<span class="t" style="left:691.85px;top:593px;font-size:10px;letter-spacing:0.180px;font-weight:normal;color:#1f2733">2025/03/05 13:44:58</span>
<span class="t" style="left:833.75px;top:593px;font-size:10px;letter-spacing:0.070px;font-weight:normal;color:#1f2733">Individual</span>
<span class="t" style="left:919.75px;top:593px;font-size:10px;letter-spacing:-0.086px;font-weight:normal;color:#1f2733">Design Stage</span>
<span class="t" style="left:1022.13px;top:592px;font-size:10.5px;letter-spacing:0.107px;color:#10141c">300</span>
<span class="t" style="left:1425.05px;top:593px;font-size:10px;letter-spacing:0.206px;font-weight:normal;color:#1f2733">300</span>
<span class="t" style="left:691.85px;top:618px;font-size:10px;letter-spacing:0.180px;font-weight:normal;color:#1f2733">2025/03/05 13:44:34</span>
<span class="t" style="left:833.75px;top:618px;font-size:10px;letter-spacing:0.070px;font-weight:normal;color:#1f2733">Individual</span>
<span class="t" style="left:919.75px;top:618px;font-size:10px;letter-spacing:-0.086px;font-weight:normal;color:#1f2733">Design Stage</span>
<span class="t" style="left:1022.13px;top:617px;font-size:10.5px;letter-spacing:0.107px;color:#10141c">292</span>
<span class="t" style="left:1563.77px;top:618px;font-size:10px;letter-spacing:0.206px;font-weight:normal;color:#1f2733">292</span>
<span class="t" style="left:691.85px;top:643px;font-size:10px;letter-spacing:0.180px;font-weight:normal;color:#1f2733">2025/03/05 13:43:10</span>
<span class="t" style="left:833.75px;top:643px;font-size:10px;letter-spacing:0.070px;font-weight:normal;color:#1f2733">Individual</span>
<span class="t" style="left:919.75px;top:643px;font-size:10px;letter-spacing:-0.086px;font-weight:normal;color:#1f2733">Design Stage</span>
<span class="t" style="left:1022.13px;top:642px;font-size:10.5px;letter-spacing:0.107px;color:#10141c">299</span>
<span class="t" style="left:1355.69px;top:643px;font-size:10px;letter-spacing:0.206px;font-weight:normal;color:#1f2733">299</span>
<span class="t" style="left:691.85px;top:668px;font-size:10px;letter-spacing:0.180px;font-weight:normal;color:#1f2733">2025/03/05 13:42:38</span>
<span class="t" style="left:833.75px;top:668px;font-size:10px;letter-spacing:0.070px;font-weight:normal;color:#1f2733">Individual</span>
<span class="t" style="left:919.75px;top:668px;font-size:10px;letter-spacing:-0.086px;font-weight:normal;color:#1f2733">Design Stage</span>
<span class="t" style="left:1022.13px;top:667px;font-size:10.5px;letter-spacing:0.107px;color:#10141c">286</span>
<span class="t" style="left:1286.33px;top:668px;font-size:10px;letter-spacing:0.206px;font-weight:normal;color:#1f2733">286</span>
<span class="t" style="left:691.85px;top:693px;font-size:10px;letter-spacing:0.180px;font-weight:normal;color:#1f2733">2025/03/05 13:42:01</span>
<span class="t" style="left:833.75px;top:693px;font-size:10px;letter-spacing:0.070px;font-weight:normal;color:#1f2733">Individual</span>
<span class="t" style="left:919.75px;top:693px;font-size:10px;letter-spacing:-0.086px;font-weight:normal;color:#1f2733">Design Stage</span>
<span class="t" style="left:1022.13px;top:692px;font-size:10.5px;letter-spacing:0.107px;color:#10141c">286</span>
<span class="t" style="left:1216.97px;top:693px;font-size:10px;letter-spacing:0.206px;font-weight:normal;color:#1f2733">286</span>
<svg style="left:0;top:740px" width="1918" height="196" viewBox="0 740 1918 196"><rect x="330.20" y="818.2" width="19.3" height="130" fill="#e2e7ee"/><rect x="400.23" y="818.2" width="19.3" height="130" fill="#e2e7ee"/><rect x="470.26" y="818.2" width="19.3" height="130" fill="#e2e7ee"/><rect x="540.29" y="818.2" width="19.3" height="130" fill="#e2e7ee"/><rect x="610.32" y="818.2" width="19.3" height="130" fill="#e2e7ee"/><rect x="680.35" y="818.2" width="19.3" height="130" fill="#e2e7ee"/><rect x="750.38" y="818.2" width="19.3" height="130" fill="#e2e7ee"/><rect x="820.41" y="818.2" width="19.3" height="130" fill="#e2e7ee"/><rect x="890.44" y="818.2" width="19.3" height="130" fill="#e2e7ee"/><rect x="960.47" y="818.2" width="19.3" height="130" fill="#e2e7ee"/><rect x="1030.50" y="818.2" width="19.3" height="130" fill="#e2e7ee"/><rect x="304.8" y="817.80" width="754.2" height="1" fill="#d4dce6"/><rect x="304.8" y="845.83" width="754.2" height="1" fill="#d4dce6"/><rect x="304.8" y="873.86" width="754.2" height="1" fill="#d4dce6"/><rect x="304.8" y="901.89" width="754.2" height="1" fill="#d4dce6"/><rect x="304.8" y="929.92" width="754.2" height="1" fill="#d4dce6"/></svg>
<span class="t" style="left:268.67px;top:761px;font-size:14px;letter-spacing:-0.342px;color:#1b2233">Recent 1*Tags &amp; N*Disciplines Results</span>
<span class="t" style="left:991.86px;top:763px;font-size:12px;letter-spacing:-0.167px;color:#364152">Out of 300</span>
<span class="t" style="left:268.76px;top:791px;font-size:12px;letter-spacing:0.374px;font-weight:normal;color:#4a5363">Tags</span>
<div class="a" style="left:310.2px;top:784px;width:179.40000000000003px;height:26px;border:1px solid #7b899f;border-radius:3px;background:#fff"></div>
<svg style="left:468.20000000000005px;top:791.0px" width="16" height="12" viewBox="0 0 16 12"><path d="M2.2 3.4 L8 9 L13.8 3.4" fill="none" stroke="#222b38" stroke-width="1.3"/></svg>
<span class="t" style="left:268.67px;top:814px;font-size:14px;letter-spacing:0.600px;font-weight:normal;color:#363e4b">500</span>
<span class="t" style="left:268.67px;top:842px;font-size:14px;letter-spacing:0.600px;font-weight:normal;color:#363e4b">400</span>
<span class="t" style="left:268.67px;top:870px;font-size:14px;letter-spacing:0.600px;font-weight:normal;color:#363e4b">300</span>
<span class="t" style="left:268.67px;top:898px;font-size:14px;letter-spacing:0.600px;font-weight:normal;color:#363e4b">200</span>
<span class="t" style="left:268.67px;top:926px;font-size:14px;letter-spacing:0.600px;font-weight:normal;color:#363e4b">100</span>
<svg style="left:0;top:740px" width="1918" height="196" viewBox="0 740 1918 196"><path d="M1871 763.4 H1883.2 Q1883.4 765.2 1882 766.2 L1879.2 768.6 V774.4 L1875.8 776 V768.6 L1872.2 766.2 Q1870.8 765.2 1871 763.4 Z" fill="#07080a"/><path d="M1200.10 791.35 L1205.19 785.10 Q1206.19 784.10 1207.79 784.10 H1243.10 Q1245.10 784.10 1245.10 786.10 V796.60 Q1245.10 798.60 1243.10 798.60 H1207.79 Q1206.19 798.60 1205.19 797.60 Z" fill="#9fb8da"/><circle cx="1205.60" cy="791.35" r="1.5" fill="#fff"/><path d="M1260.10 791.35 L1265.19 785.10 Q1266.19 784.10 1267.79 784.10 H1303.10 Q1305.10 784.10 1305.10 786.10 V796.60 Q1305.10 798.60 1303.10 798.60 H1267.79 Q1266.19 798.60 1265.19 797.60 Z" fill="#a7ccd6"/><circle cx="1265.60" cy="791.35" r="1.5" fill="#fff"/><path d="M1320.10 791.35 L1325.19 785.10 Q1326.19 784.10 1327.79 784.10 H1363.10 Q1365.10 784.10 1365.10 786.10 V796.60 Q1365.10 798.60 1363.10 798.60 H1327.79 Q1326.19 798.60 1325.19 797.60 Z" fill="#a9dfce"/><circle cx="1325.60" cy="791.35" r="1.5" fill="#fff"/><path d="M1380.10 791.35 L1385.19 785.10 Q1386.19 784.10 1387.79 784.10 H1423.10 Q1425.10 784.10 1425.10 786.10 V796.60 Q1425.10 798.60 1423.10 798.60 H1387.79 Q1386.19 798.60 1385.19 797.60 Z" fill="#b4eac9"/><circle cx="1385.60" cy="791.35" r="1.5" fill="#fff"/><path d="M1440.10 791.35 L1445.19 785.10 Q1446.19 784.10 1447.79 784.10 H1483.10 Q1485.10 784.10 1485.10 786.10 V796.60 Q1485.10 798.60 1483.10 798.60 H1447.79 Q1446.19 798.60 1445.19 797.60 Z" fill="#c5e8b5"/><circle cx="1445.60" cy="791.35" r="1.5" fill="#fff"/><path d="M1500.10 791.35 L1505.19 785.10 Q1506.19 784.10 1507.79 784.10 H1543.10 Q1545.10 784.10 1545.10 786.10 V796.60 Q1545.10 798.60 1543.10 798.60 H1507.79 Q1506.19 798.60 1505.19 797.60 Z" fill="#d5e0a9"/><circle cx="1505.60" cy="791.35" r="1.5" fill="#fff"/><path d="M1560.10 791.35 L1565.19 785.10 Q1566.19 784.10 1567.79 784.10 H1603.10 Q1605.10 784.10 1605.10 786.10 V796.60 Q1605.10 798.60 1603.10 798.60 H1567.79 Q1566.19 798.60 1565.19 797.60 Z" fill="#e5d999"/><circle cx="1565.60" cy="791.35" r="1.5" fill="#fff"/><path d="M1620.10 791.35 L1625.19 785.10 Q1626.19 784.10 1627.79 784.10 H1663.10 Q1665.10 784.10 1665.10 786.10 V796.60 Q1665.10 798.60 1663.10 798.60 H1627.79 Q1626.19 798.60 1625.19 797.60 Z" fill="#f0d09b"/><circle cx="1625.60" cy="791.35" r="1.5" fill="#fff"/><path d="M1680.10 791.35 L1685.19 785.10 Q1686.19 784.10 1687.79 784.10 H1723.10 Q1725.10 784.10 1725.10 786.10 V796.60 Q1725.10 798.60 1723.10 798.60 H1687.79 Q1686.19 798.60 1685.19 797.60 Z" fill="#f5c4a4"/><circle cx="1685.60" cy="791.35" r="1.5" fill="#fff"/><path d="M1740.10 791.35 L1745.19 785.10 Q1746.19 784.10 1747.79 784.10 H1783.10 Q1785.10 784.10 1785.10 786.10 V796.60 Q1785.10 798.60 1783.10 798.60 H1747.79 Q1746.19 798.60 1745.19 797.60 Z" fill="#f7bcbc"/><circle cx="1745.60" cy="791.35" r="1.5" fill="#fff"/><path d="M1800.10 791.35 L1805.19 785.10 Q1806.19 784.10 1807.79 784.10 H1843.10 Q1845.10 784.10 1845.10 786.10 V796.60 Q1845.10 798.60 1843.10 798.60 H1807.79 Q1806.19 798.60 1805.19 797.60 Z" fill="#f9b8dc"/><circle cx="1805.60" cy="791.35" r="1.5" fill="#fff"/><path d="M1860.10 791.35 L1865.19 785.10 Q1866.19 784.10 1867.79 784.10 H1903.10 Q1905.10 784.10 1905.10 786.10 V796.60 Q1905.10 798.60 1903.10 798.60 H1867.79 Q1866.19 798.60 1865.19 797.60 Z" fill="#f5b0f0"/><circle cx="1865.60" cy="791.35" r="1.5" fill="#fff"/></svg>
<span class="t" style="left:1098.37px;top:762px;font-size:14px;letter-spacing:-0.432px;color:#1b2233">Recent Tags &amp; Disciplines Results</span>
<span class="t" style="left:1808.26px;top:763px;font-size:12px;letter-spacing:-0.234px;color:#364152">Out of 300</span>
<span class="t" style="left:1098.46px;top:788px;font-size:12px;letter-spacing:-0.196px;color:#2a3342">Tags\Disciplines</span>
<span class="t" style="left:1215.86px;top:787px;font-size:12px;letter-spacing:0.208px;font-weight:normal;color:#fff;-webkit-text-stroke:0.3px #fff">AR</span>
<span class="t" style="left:1276.26px;top:787px;font-size:12px;letter-spacing:-0.264px;font-weight:normal;color:#14181f;-webkit-text-stroke:0.3px #14181f">ST</span>
<span class="t" style="left:1335.86px;top:787px;font-size:12px;letter-spacing:-0.292px;font-weight:normal;color:#14181f;-webkit-text-stroke:0.3px #14181f">AC</span>
<span class="t" style="left:1396.96px;top:787px;font-size:12px;letter-spacing:-0.900px;font-weight:normal;color:#14181f;-webkit-text-stroke:0.3px #14181f">EL</span>
<span class="t" style="left:1456.76px;top:787px;font-size:12px;letter-spacing:-0.664px;font-weight:normal;color:#14181f;-webkit-text-stroke:0.3px #14181f">FS</span>
<span class="t" style="left:1518.96px;top:787px;font-size:12px;letter-spacing:-0.664px;font-weight:normal;color:#14181f;-webkit-text-stroke:0.3px #14181f">IS</span>
<span class="t" style="left:1576.76px;top:787px;font-size:12px;letter-spacing:-0.107px;font-weight:normal;color:#14181f;-webkit-text-stroke:0.3px #14181f">PL</span>
<span class="t" style="left:1635.83px;top:787px;font-size:12px;letter-spacing:-0.900px;font-weight:normal;color:#14181f;-webkit-text-stroke:0.3px #14181f">DR</span>
<span class="t" style="left:1691.96px;top:787px;font-size:12px;letter-spacing:-0.131px;font-weight:normal;color:#14181f;-webkit-text-stroke:0.3px #14181f">LIFT</span>
<span class="t" style="left:1753.26px;top:787px;font-size:12px;letter-spacing:-0.632px;font-weight:normal;color:#14181f;-webkit-text-stroke:0.3px #14181f">TPE</span>
<span class="t" style="left:1812.16px;top:787px;font-size:12px;letter-spacing:-0.768px;font-weight:normal;color:#14181f;-webkit-text-stroke:0.3px #14181f">MEP</span>
<span class="t" style="left:1869.36px;top:787px;font-size:12px;letter-spacing:0.416px;font-weight:normal;color:#14181f;-webkit-text-stroke:0.3px #14181f">Other</span>
<div class="a" style="left:1889px;top:780px;width:6px;height:24px;background:#fff"></div>
<div class="a" style="left:1895px;top:740px;width:23px;height:196px;background:#ededed"></div>
<span class="t" style="left:1454.78px;top:904px;font-size:16px;letter-spacing:0.228px;font-weight:normal;color:#a9b7c8">No content</span>
</body></html>
